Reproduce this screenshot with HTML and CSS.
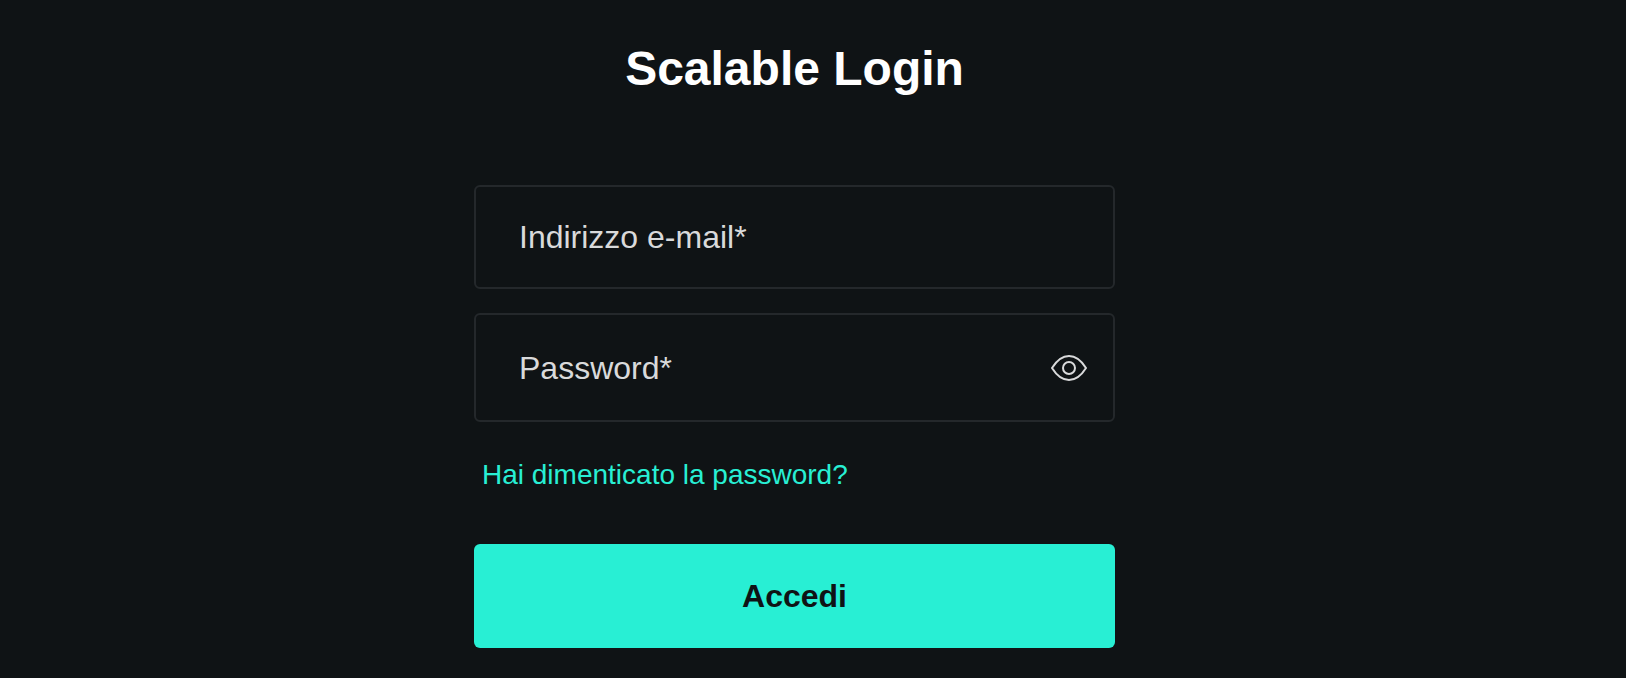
FILE: index.html
```html
<!DOCTYPE html>
<html lang="it">
<head>
<meta charset="UTF-8">
<meta name="viewport" content="width=device-width, initial-scale=1">
<title>Scalable Login</title>
<link rel="stylesheet" href="styles.css">
</head>
<body>
<main class="login">
    <h1>Scalable Login</h1>

    <form class="login_form">
        <div class="field">
            <label for="email">Indirizzo e-mail*</label>
            <input type="email" id="email" required>
        </div>
        <div class="field password">
            <label for="password">Password*</label>
            <input type="password" id="password" required>
            <button type="button" class="toggle" aria-label="Mostra password">
                <svg width="40" height="40" viewBox="0 0 40 40" fill="none" stroke="currentColor" stroke-width="2" stroke-linejoin="round">
                    <path d="M3 20C8 12 13.500 8 20 8S32 12 37 20C32 28 26.500 32 20 32S8 28 3 20Z"/>
                    <circle cx="20" cy="20" r="6"/>
                </svg>
            </button>
        </div>
        <a href="#" class="forgot">Hai dimenticato la password?</a>
        <button type="submit" class="submit">Accedi</button>
    </form>
</main>
</body>
</html>
```
FILE: styles.css
```css
* {
    box-sizing: border-box;
}

body {
    margin: 0;
    font-family: "Liberation Sans", Arial, sans-serif;
    background: #0f1315;
    color: #d9dadb;
}

.login {
    padding: 41px 37px 30px 0;
}

.login h1 {
    margin: 0 0 88px;
    font-size: 48px;
    line-height: 56px;
    text-align: center;
    color: white;
}

.login_form {
    display: flex;
    flex-direction: column;
    max-width: 641px;
    margin: 0 auto;
}

.field {
    display: flex;
    align-items: center;
    min-height: 104px;
    margin-bottom: 24px;
    padding: 0 24px 0 43px;
    border: 2px solid #24282b;
    border-radius: 6px;
    font-size: 32px;
}

.field.password {
    min-height: 109px;
    margin-bottom: 37px;
}

.field:focus-within {
    border-color: #28efd4;
}

.field label {
    line-height: 40px;
    white-space: nowrap;
    cursor: text;
}

.field input {
    flex: 1;
    min-width: 0;
    height: 64px;
    padding: 0 12px;
    border: none;
    outline: none;
    background: none;
    color: white;
    font: inherit;
}

.toggle {
    padding: 0;
    border: none;
    background: none;
    color: inherit;
    cursor: pointer;
}

.toggle svg {
    display: block;
}

.forgot {
    align-self: flex-start;
    margin: 0 0 53px 8px;
    font-size: 28px;
    line-height: 32px;
    color: #28efd4;
    text-decoration: none;
}

.forgot:hover {
    text-decoration: underline;
}

.submit {
    min-height: 104px;
    border: none;
    border-radius: 6px;
    background: #28efd4;
    color: #0f1315;
    font: bold 32px "Liberation Sans", Arial, sans-serif;
    cursor: pointer;
}
```
